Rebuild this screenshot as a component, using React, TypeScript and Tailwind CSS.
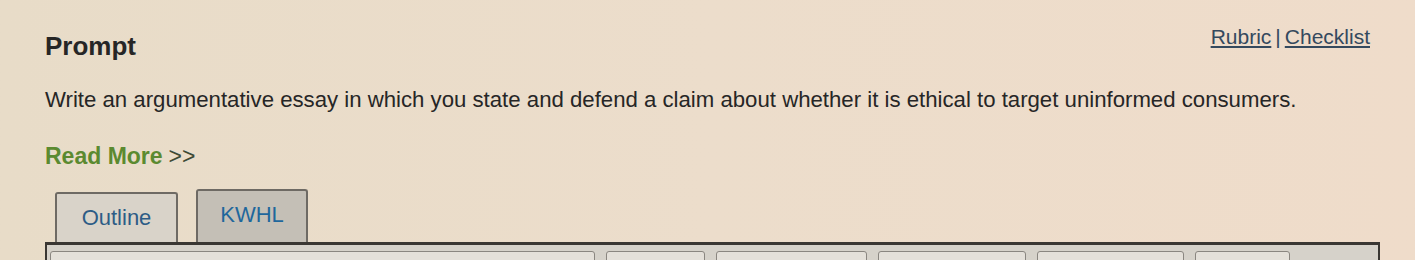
import React from "react";

const font = { fontFamily: '"Liberation Sans", Arial, sans-serif' };

function Tab({ label, active }: { label: string; active?: boolean }) {
  return (
    <div
      className={
        "flex items-center justify-center rounded-t-[3px] border-2 border-b-0 border-[#6e6a64] text-[22px] " +
        (active
          ? "h-[53px] w-[112px] bg-[#c4bfb6] pb-[4px] text-[#1f679c]"
          : "mt-[3px] h-[50px] w-[123px] bg-[#d9d3c9] text-[#2d5c86]")
      }
    >
      {label}
    </div>
  );
}

const toolButtons = [
  { w: "w-[545px]", label: "" },
  { w: "w-[99px]", label: "" },
  { w: "w-[151px]", label: "" },
  { w: "w-[148px]", label: "" },
  { w: "w-[147px]", label: "Font" },
  { w: "w-[95px]", label: "Size" },
];

export default function App() {
  return (
    <div
      className="h-[260px] w-[1415px] overflow-hidden bg-gradient-to-r from-[#e8dcc8] via-[#ecddcb] to-[#efdcca] text-[#2b2b2b]"
      style={font}
    >
      <div className="px-[45px] pt-[21px]">
        <div className="flex items-start justify-between">
          <h2 className="mt-[6px] text-[26px] leading-[1.5] font-bold text-[#262626]">Prompt</h2>
          <div className="text-[21px] leading-[1.5] text-[#34495e]">
            <a className="underline underline-offset-2">Rubric</a>
            <span className="mx-[4px]">|</span>
            <a className="underline underline-offset-2">Checklist</a>
          </div>
        </div>
        <p className="mt-[17px] text-[22.2px] leading-[1.5] text-[#262626]">
          Write an argumentative essay in which you state and defend a claim about whether it is ethical to target
          uninformed consumers.
        </p>
        <div className="mt-[23px] text-[23px] leading-[1.5]">
          <span className="font-semibold text-[#5b8a30]">Read More</span>
          <span className="ml-[6px] text-[#3d4a35]">&gt;&gt;</span>
        </div>
        <div className="mt-[15px] flex items-start gap-[18px] pl-[10px]">
          <Tab label="Outline" />
          <Tab label="KWHL" active />
        </div>
        <div className="-mr-[10px] border-t-[3px] border-r-2 border-l-2 border-[#3a3733] bg-[#d6d2ca] pt-[6px] pl-[3px]">
          <div className="flex gap-[11px]">
            {toolButtons.map((b, i) => (
              <div
                key={i}
                className={
                  b.w +
                  " flex h-[30px] items-start justify-center rounded-[3px] border border-[#8a8680] bg-[#e4e0d9] pt-[6px] text-[15px] leading-none text-[#444]"
                }
              >
                {b.label}
              </div>
            ))}
          </div>
        </div>
      </div>
    </div>
  );
}
